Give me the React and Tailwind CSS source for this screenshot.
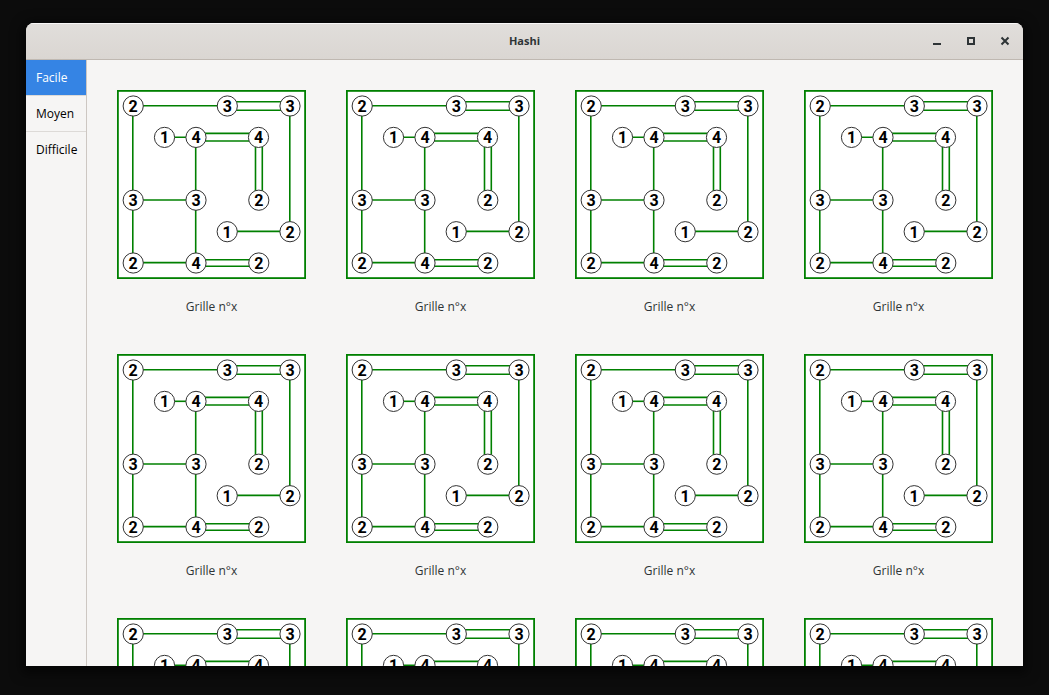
import React, { useState } from "react";

const LEVELS = ["Facile", "Moyen", "Difficile"];

const ISLANDS = [
  [16.2, 16, 2], [110.3, 16, 3], [173, 16, 3],
  [47.5, 47.4, 1], [79, 47.4, 4], [141.5, 47.4, 4],
  [16.2, 110.2, 3], [79, 110.2, 3], [141.8, 110.2, 2],
  [110.2, 141.7, 1], [173, 141.7, 2],
  [16.2, 173, 2], [79, 173, 4], [141.8, 173, 2],
];

const BRIDGES = [
  [16, 15.8, 110, 15.8],
  [110, 11.8, 173, 11.8], [110, 20.3, 173, 20.3],
  [47, 47.3, 79, 47.3],
  [79, 43.4, 141, 43.4], [79, 51, 141, 51],
  [15.8, 16, 15.8, 173],
  [78.7, 47, 78.7, 173],
  [138.5, 47, 138.5, 110], [145.3, 47, 145.3, 110],
  [172.8, 16, 172.8, 142],
  [16, 110, 79, 110],
  [110, 141.4, 173, 141.4],
  [16, 172.6, 79, 172.6],
  [79, 169.7, 142, 169.7], [79, 176.2, 142, 176.2],
];

function Board() {
  return (
    <svg viewBox="0 0 189 189" className="block aspect-square w-full" aria-hidden="true">
      <rect x="0.9" y="0.9" width="187.2" height="187.2" fill="#fff" stroke="#008000" strokeWidth="1.8" />
      <g stroke="#008000" strokeWidth="1.6">
        {BRIDGES.map(([x1, y1, x2, y2], i) => (
          <line key={i} x1={x1} y1={y1} x2={x2} y2={y2} />
        ))}
      </g>
      {ISLANDS.map(([x, y, n], i) => (
        <g key={i}>
          <circle cx={x} cy={y} r="10.1" fill="#fff" stroke="#333" strokeWidth="1" />
          <text
            x={x}
            y={y + 6}
            textAnchor="middle"
            className="fill-black font-['Roboto',sans-serif] text-base font-bold"
          >
            {n}
          </text>
        </g>
      ))}
    </svg>
  );
}

function WindowButton({ label, children }) {
  return (
    <button type="button" aria-label={label} className="flex size-6 items-center justify-center">
      <svg viewBox="0 0 16 16" className="size-4" fill="none" stroke="#2e3436" strokeWidth="2">
        {children}
      </svg>
    </button>
  );
}

export default function App() {
  const [level, setLevel] = useState("Facile");

  return (
    <div className="h-screen bg-[#0c0c0c] px-[26px] pt-[23px] pb-[29px] font-['Open_Sans','Noto_Sans',sans-serif] text-xs text-[#2e3436]">
      <div className="flex h-full flex-col overflow-hidden rounded-t-lg bg-[#f6f5f4] shadow-[0_3px_12px_4px_rgba(0,0,0,0.6)]">
        <header className="grid h-[37px] shrink-0 grid-cols-[1fr_auto_1fr] items-center border-b border-[#bfb8b1] bg-linear-to-b from-[#e1dedb] to-[#dad6d2] px-1.5 shadow-[inset_0_1px_#f9f8f8]">
          <h1 className="col-start-2 text-[11px] font-bold">Hashi</h1>
          <div className="flex justify-end gap-2.5">
            <WindowButton label="Réduire">
              <path d="M4 11h8" />
            </WindowButton>
            <WindowButton label="Agrandir">
              <path d="M5 5h6v6H5z" />
            </WindowButton>
            <WindowButton label="Fermer">
              <path d="M4.5 4.5l7 7M11.5 4.5l-7 7" />
            </WindowButton>
          </div>
        </header>

        <div className="flex min-h-0 flex-1">
          <nav className="w-[61px] shrink-0 border-r border-[#cdc7c2]">
            {LEVELS.map((name) => (
              <button
                key={name}
                type="button"
                onClick={() => setLevel(name)}
                className={`block h-9 w-full border-b border-[#dddad7] px-2.5 text-left last:border-transparent ${
                  level === name ? "bg-[#3584e4] bg-clip-padding text-white" : "text-black"
                }`}
              >
                {name}
              </button>
            ))}
          </nav>

          <main className="min-w-0 flex-1 overflow-hidden px-[30px] pt-[30px]">
            <ul className="grid grid-cols-4 gap-x-10 gap-y-[30px]">
              {Array.from({ length: 12 }, (_, i) => (
                <li key={i}>
                  <button type="button" className="block w-full pb-[9px] text-center">
                    <Board />
                    <span className="mt-5 block h-4 leading-4">Grille n°x</span>
                  </button>
                </li>
              ))}
            </ul>
          </main>
        </div>
      </div>
    </div>
  );
}
